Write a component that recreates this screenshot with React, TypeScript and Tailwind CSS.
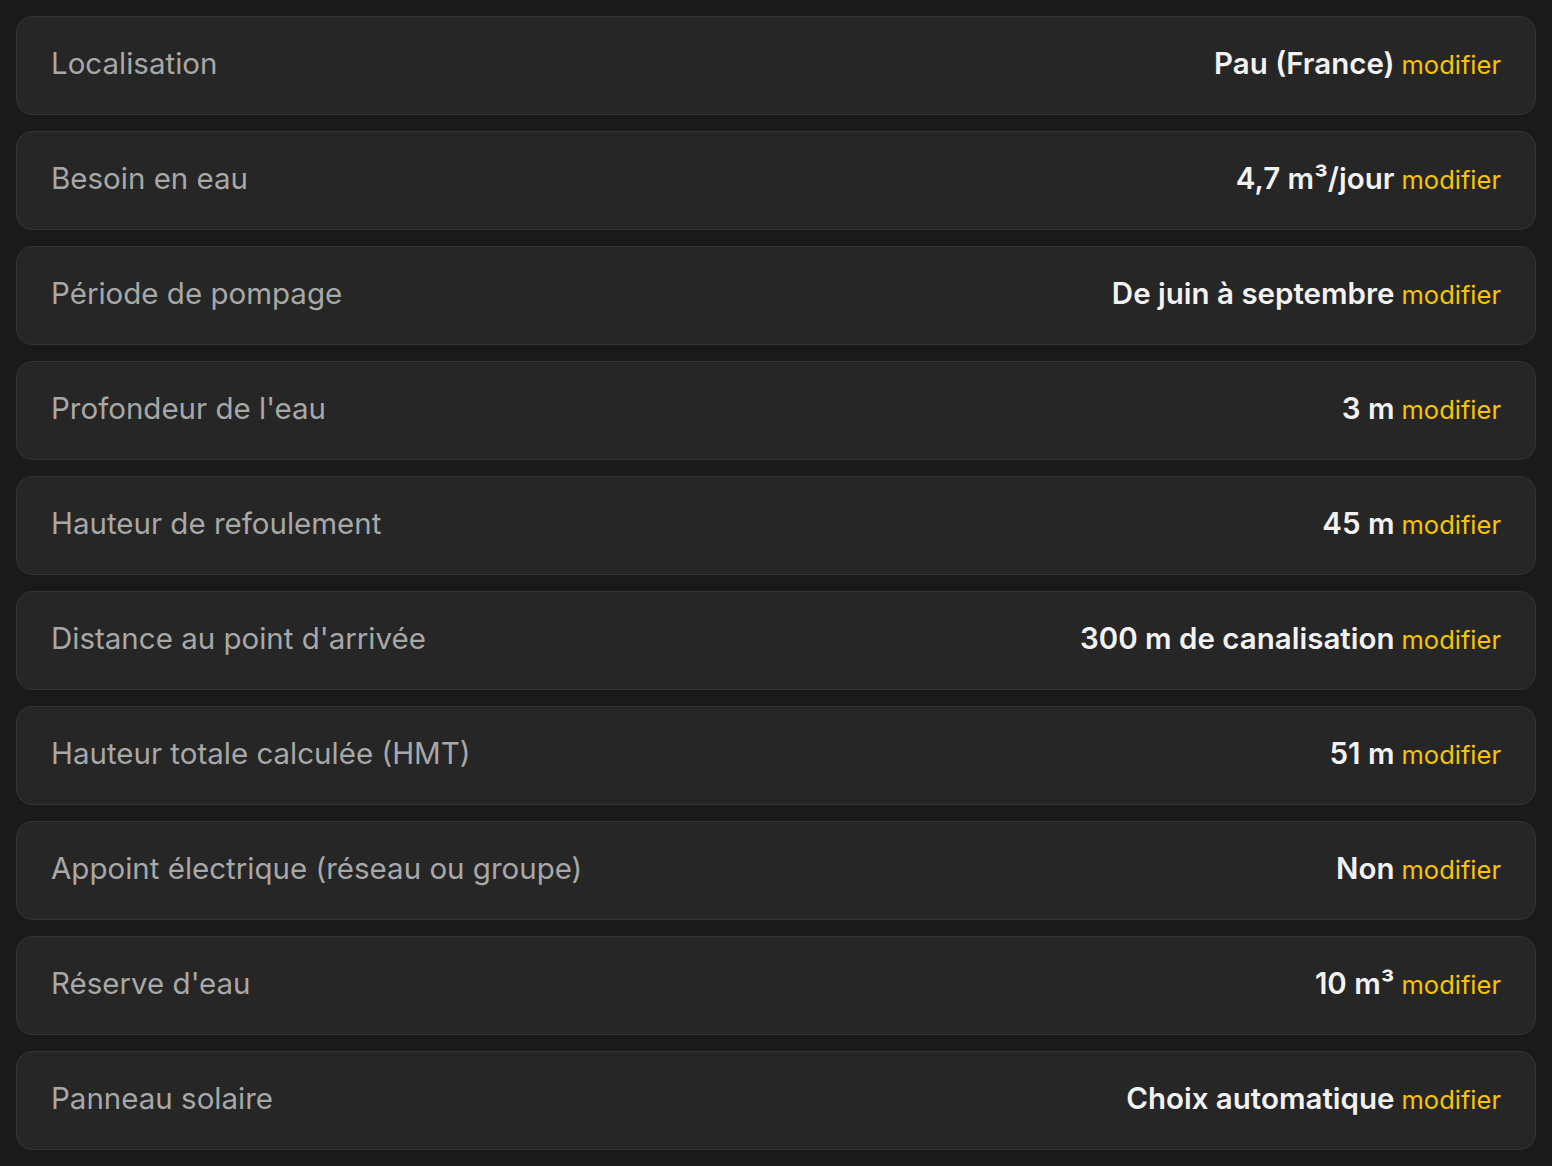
import React from "react";

const rows: { label: string; value: React.ReactNode }[] = [
  { label: "Localisation", value: "Pau (France)" },
  { label: "Besoin en eau", value: "4,7 m³/jour" },
  { label: "Période de pompage", value: "De juin à septembre" },
  { label: "Profondeur de l'eau", value: "3 m" },
  { label: "Hauteur de refoulement", value: "45 m" },
  { label: "Distance au point d'arrivée", value: "300 m de canalisation" },
  { label: "Hauteur totale calculée (HMT)", value: "51 m" },
  { label: "Appoint électrique (réseau ou groupe)", value: "Non" },
  { label: "Réserve d'eau", value: "10 m³" },
  { label: "Panneau solaire", value: "Choix automatique" },
];

const Row = ({ label, value }: { label: string; value: React.ReactNode }) => (
  <div className="flex h-[99px] items-center justify-between rounded-2xl border border-[#333333] bg-[#262626] px-[34px] pb-[4px]">
    <span className="text-[29.5px] text-[#a8a8a8]">{label}</span>
    <span className="flex items-baseline gap-[7px]">
      <span className="text-[29.5px] font-semibold text-[#f2f2f2]">{value}</span>
      <span className="text-[25.5px] text-[#f7c400]">modifier</span>
    </span>
  </div>
);

export default function App() {
  return (
    <div
      className="flex min-h-[1166px] flex-col gap-4 bg-[#1a1a1a] p-4"
      style={{ fontFamily: "Inter, 'Noto Sans', sans-serif" }}
    >
      {rows.map((r) => (
        <Row key={r.label} label={r.label} value={r.value} />
      ))}
    </div>
  );
}
